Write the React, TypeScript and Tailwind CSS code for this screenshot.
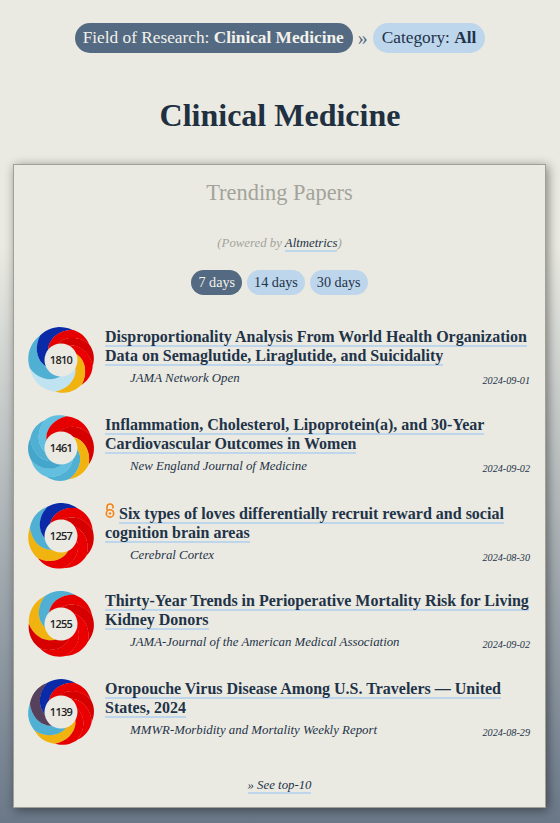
const SERIF = "font-['Liberation_Serif',serif]";

// donut palette, roughly the altmetric source colours
const C = {
  red: ["#e60000", "#d60000", "#ea0000"],
  yellow: ["#f1b30f", "#f4bc20", "#eeaa08"],
  cyan: ["#4fb0d4", "#62bfe0", "#45a6cb"],
  pale: ["#bfe3f0", "#c9e8f2", "#b4dcec"],
  blue: ["#0a2aa8", "#0d1f9c", "#1034b4"],
  dark: ["#56405c", "#4a3a55", "#5f4a63"],
};
type Seg = { c: keyof typeof C; from: number; to: number };

const R = 33;
const HOLE = 16.5;
const SHIFT = 75; // how far a band swirls going from rim to hole

function petal(from: number, to: number) {
  const pts: string[] = [];
  const at = (deg: number, r: number) => {
    const t = ((deg - 90) * Math.PI) / 180;
    return `${(R + r * Math.cos(t)).toFixed(2)},${(R + r * Math.sin(t)).toFixed(2)}`;
  };
  const n = 10;
  for (let i = 0; i <= n; i++) {
    const f = i / n;
    pts.push(at(from + (to - from) * f, R - 0.8 + 0.8 * Math.sin(f * Math.PI)));
  }
  for (let i = 1; i <= n; i++) {
    const f = i / n;
    pts.push(at(to - SHIFT * f, R - 0.8 - (R - HOLE) * f));
  }
  for (let i = n; i >= 0; i--) {
    const f = i / n;
    pts.push(at(from + (to - from) * f - SHIFT, HOLE - 1));
  }
  for (let i = n; i >= 1; i--) {
    const f = i / n;
    pts.push(at(from - SHIFT * f, R - 0.8 - (R - HOLE) * f));
  }
  return pts.join(" ");
}

function Donut({ score, segs }: { score: number; segs: Seg[] }) {
  const petals: { d: string; fill: string }[] = [];
  segs.forEach((s) => {
    const count = Math.max(1, Math.round((s.to - s.from) / 45));
    const step = (s.to - s.from) / count;
    for (let i = 0; i < count; i++) {
      petals.push({
        d: petal(s.from + i * step, s.from + (i + 1) * step + 0.6),
        fill: C[s.c][i % 3],
      });
    }
  });
  return (
    <div className="relative h-[66px] w-[66px] shrink-0">
      <svg viewBox="0 0 66 66" className="h-[66px] w-[66px]">
        {petals.map((p, i) => (
          <polygon key={i} points={p.d} fill={p.fill} />
        ))}
        <circle cx={R} cy={R} r={HOLE} fill="#eaeae2" />
      </svg>
      <span className="absolute inset-0 grid place-items-center font-['Open_Sans',sans-serif] text-[11px] font-semibold tracking-[-0.7px] text-[#222]">
        {score}
      </span>
    </div>
  );
}

function OpenAccess() {
  return (
    <svg viewBox="0 0 10 15" className="mr-[4px] inline-block h-[15px] w-[10px] align-[1px]" fill="none" stroke="#f68212">
      <path d="M2 7 V4 a3 3 0 0 1 6 0 V5.5" strokeWidth="1.6" />
      <circle cx="5" cy="10.4" r="3.7" strokeWidth="1.6" />
      <circle cx="5" cy="10.4" r="1" fill="#f68212" strokeWidth="0.4" />
    </svg>
  );
}

const PAPERS: { score: number; title: string; journal: string; date: string; oa?: boolean; segs: Seg[] }[] = [
  {
    score: 1810,
    title: "Disproportionality Analysis From World Health Organization Data on Semaglutide, Liraglutide, and Suicidality",
    journal: "JAMA Network Open",
    date: "2024-09-01",
    segs: [
      { c: "pale", from: 190, to: 255 },
      { c: "cyan", from: 255, to: 320 },
      { c: "blue", from: 320, to: 380 },
      { c: "red", from: 380, to: 500 },
      { c: "yellow", from: 500, to: 550 },
    ],
  },
  {
    score: 1461,
    title: "Inflammation, Cholesterol, Lipoprotein(a), and 30-Year Cardiovascular Outcomes in Women",
    journal: "New England Journal of Medicine",
    date: "2024-09-02",
    segs: [
      { c: "cyan", from: 165, to: 370 },
      { c: "red", from: 370, to: 480 },
      { c: "yellow", from: 480, to: 525 },
    ],
  },
  {
    score: 1257,
    title: "Six types of loves differentially recruit reward and social cognition brain areas",
    journal: "Cerebral Cortex",
    date: "2024-08-30",
    oa: true,
    segs: [
      { c: "yellow", from: 225, to: 285 },
      { c: "cyan", from: 285, to: 335 },
      { c: "blue", from: 335, to: 390 },
      { c: "red", from: 390, to: 585 },
    ],
  },
  {
    score: 1255,
    title: "Thirty-Year Trends in Perioperative Mortality Risk for Living Kidney Donors",
    journal: "JAMA-Journal of the American Medical Association",
    date: "2024-09-02",
    segs: [
      { c: "yellow", from: 270, to: 330 },
      { c: "cyan", from: 330, to: 385 },
      { c: "red", from: 385, to: 630 },
    ],
  },
  {
    score: 1139,
    title: "Oropouche Virus Disease Among U.S. Travelers — United States, 2024",
    journal: "MMWR-Morbidity and Mortality Weekly Report",
    date: "2024-08-29",
    segs: [
      { c: "yellow", from: 190, to: 235 },
      { c: "cyan", from: 235, to: 285 },
      { c: "dark", from: 285, to: 335 },
      { c: "blue", from: 335, to: 385 },
      { c: "red", from: 385, to: 550 },
    ],
  },
];

const link = "border-b-2 border-[#bdd6ec] text-[#1f3349]";

export default function App() {
  return (
    <div className={`${SERIF} min-h-[823px] bg-[linear-gradient(to_bottom,#eaeae2_0%,#eaeae2_30%,#6a7888_100%)] px-[13px] pt-[23px] pb-[15px] text-[#1f3349]`}>
      {/* breadcrumb */}
      <div className="flex items-center justify-center text-[17.3px] leading-[20px]">
        <span className="rounded-[15px] bg-[#546a82] py-[5px] pr-[9px] pl-[8px] text-[#f2f2ea]">
          Field of Research: <b>Clinical Medicine</b>
        </span>
        <span className="mx-[5px] text-[20px] text-[#546a82]">»</span>
        <span className="rounded-[15px] bg-[#bdd6ec] px-[9px] py-[5px]">
          Category: <b>All</b>
        </span>
      </div>

      <h1 className="mt-[42px] text-center text-[32px] leading-[40px] font-bold text-[#203040]">Clinical Medicine</h1>

      <div className="mt-[29px] mr-[1px] border border-[#a0a097] bg-[#eaeae2] px-[14px] pt-[15px] pb-[14px] shadow-[2px_2px_10px_rgba(0,0,0,0.45)]">
        <h2 className="text-center text-[22.4px] leading-[26px] text-[#a3a39b]">Trending Papers</h2>
        <p className="mt-[29px] text-center text-[12.8px] leading-[16px] text-[#a3a39b] italic">
          (Powered by <span className={link}>Altmetrics</span>)
        </p>
        <div className="mt-[19px] flex justify-center gap-[5px] text-[14.2px] leading-[17px]">
          <span className="rounded-[13px] bg-[#546a82] px-[7px] py-[4px] text-[#f2f2ea]">7 days</span>
          <span className="rounded-[13px] bg-[#bdd6ec] px-[7px] py-[4px]">14 days</span>
          <span className="rounded-[13px] bg-[#bdd6ec] px-[7px] py-[4px]">30 days</span>
        </div>

        <div className="mt-[32px] flex flex-col gap-[22px]">
          {PAPERS.map((p) => (
            <div key={p.score} className="flex h-[66px] items-start gap-[11px]">
              <Donut score={p.score} segs={p.segs} />
              <div className="min-w-0 flex-1">
                <div className="text-[16px] leading-[19px] font-bold">
                  {p.oa && <OpenAccess />}
                  <span className={link}>{p.title}</span>
                </div>
                <div className="flex items-end justify-between pt-[5px] pl-[25px] italic">
                  <span className="pb-[1px] text-[12.85px] leading-[16px]">{p.journal}</span>
                  <span className="pr-[1px] text-[10.2px] leading-[12px]">{p.date}</span>
                </div>
              </div>
            </div>
          ))}
        </div>

        <p className="mt-[32px] text-center text-[12.8px] leading-[16px] italic">
          <span className={link}>» See top-10</span>
        </p>
      </div>
    </div>
  );
}
